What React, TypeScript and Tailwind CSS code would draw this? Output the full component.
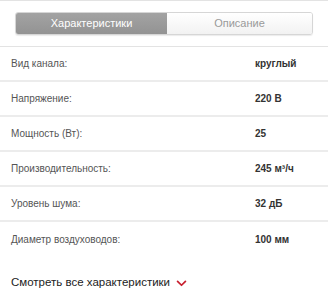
const rows = [
  { label: "Вид канала:", value: "круглый" },
  { label: "Напряжение:", value: "220 В" },
  { label: "Мощность (Вт):", value: "25" },
  { label: "Производительность:", value: "245 м³/ч" },
  { label: "Уровень шума:", value: "32 дБ" },
  { label: "Диаметр воздуховодов:", value: "100 мм" },
];

export default function App() {
  return (
    <div className="w-[328px] h-[300px] bg-white overflow-hidden font-['Liberation_Sans',Arial,sans-serif]">
      <div className="border-t border-b border-[#e3e3e3] h-[47px] flex items-start pt-[11px] px-[15px]">
        <div className="flex w-full h-[23px] rounded-[3px] border border-[#d6d6d6] overflow-hidden shadow-[0_1px_1px_rgba(0,0,0,0.08)]">
          <div className="w-[151px] flex items-center justify-center bg-gradient-to-b from-[#a3a3a3] to-[#939393] text-white text-[11px]">
            Характеристики
          </div>
          <div className="flex-1 flex items-center justify-center bg-gradient-to-b from-white to-[#f2f2f2] text-[#9a9a9a] text-[11px]">
            Описание
          </div>
        </div>
      </div>

      <div>
        {rows.map((r, i) => (
          <div
            key={r.label}
            className={`flex items-center h-[35px] text-[10px] ${
              i < rows.length - 1 ? "border-b-2 border-[#ececec]" : ""
            }`}
          >
            <span className="pl-[11px] w-[255px] text-[#555]">{r.label}</span>
            <span className="font-bold text-[#333]">{r.value}</span>
          </div>
        ))}
      </div>

      <div className="flex items-center gap-[6px] pl-[11px] mt-[17px] text-[11.5px] text-[#222]">
        <span>Смотреть все характеристики</span>
        <svg width="11" height="7" viewBox="0 0 12 8" className="mt-[1px]">
          <path d="M1.5 1.5 L6 6 L10.5 1.5" stroke="#c8202f" strokeWidth="2" fill="none" strokeLinecap="round" strokeLinejoin="round" />
        </svg>
      </div>
    </div>
  );
}
